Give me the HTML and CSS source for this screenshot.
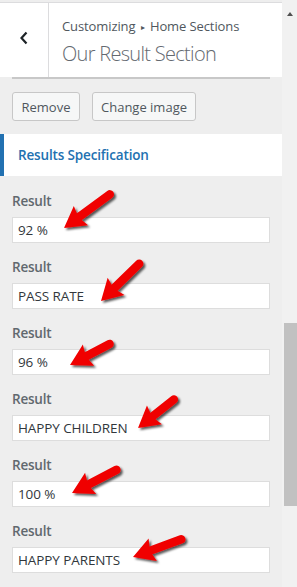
FILE: index.html
```html
<!DOCTYPE html>
<html>
<head>
<meta charset="utf-8">
<link rel="stylesheet" href="styles.css">
</head>
<body>
<div class="frame">
  <div class="panel">
    <header class="head">
      <div class="back">
        <svg width="10" height="14" viewBox="0 0 10 14"><path d="M7.5 1.5 L2.5 7 L7.5 12.5" fill="none" stroke="#1d2327" stroke-width="2.2"/></svg>
      </div>
      <div class="titles">
        <div class="crumb">Customizing <span class="tri">▸</span> Home Sections</div>
        <div class="title">Our Result Section</div>
      </div>
    </header>
    <div class="preview-edge"></div>
    <div class="btns">
      <button class="btn btn-remove">Remove</button>
      <button class="btn btn-change">Change image</button>
    </div>
    <div class="section">Results Specification</div>
    <div class="fields">
      <div class="field"><div class="label">Result</div><div class="input">92 %</div></div>
      <div class="field"><div class="label">Result</div><div class="input">PASS RATE</div></div>
      <div class="field"><div class="label">Result</div><div class="input">96 %</div></div>
      <div class="field"><div class="label">Result</div><div class="input">HAPPY CHILDREN</div></div>
      <div class="field"><div class="label">Result</div><div class="input">100 %</div></div>
      <div class="field"><div class="label">Result</div><div class="input">HAPPY PARENTS</div></div>
    </div>
  </div>
  <div class="scrollbar">
    <div class="up"></div>
    <div class="thumb"></div>
  </div>
  <svg class="arrows" width="297" height="587" viewBox="0 0 297 587">
    <defs>
      <filter id="sh" x="-30%" y="-30%" width="160%" height="160%">
        <feDropShadow dx="2" dy="2" stdDeviation="1.2" flood-color="#000" flood-opacity="0.65"/>
      </filter>
    </defs>
    <g fill="#f00000" stroke="#f00000" filter="url(#sh)">
      <g transform="translate(64 228) rotate(143.7)">
        <line x1="-12" y1="0" x2="-56.8" y2="0" stroke-width="8.5" stroke-linecap="round"/>
        <polygon points="0,0 -21,-12 -18,0 -21,12" stroke="none"/>
      </g>
      <g transform="translate(101 301) rotate(135.7)">
        <line x1="-12" y1="0" x2="-53.3" y2="0" stroke-width="8.5" stroke-linecap="round"/>
        <polygon points="0,0 -21,-12 -18,0 -21,12" stroke="none"/>
      </g>
      <g transform="translate(70 365) rotate(151.9)">
        <line x1="-12" y1="0" x2="-44.8" y2="0" stroke-width="8.5" stroke-linecap="round"/>
        <polygon points="0,0 -21,-12 -18,0 -21,12" stroke="none"/>
      </g>
      <g transform="translate(138 428) rotate(141.5)">
        <line x1="-12" y1="0" x2="-45.8" y2="0" stroke-width="8.5" stroke-linecap="round"/>
        <polygon points="0,0 -21,-12 -18,0 -21,12" stroke="none"/>
      </g>
      <g transform="translate(72 493) rotate(152.5)">
        <line x1="-12" y1="0" x2="-50.1" y2="0" stroke-width="8.5" stroke-linecap="round"/>
        <polygon points="0,0 -21,-12 -18,0 -21,12" stroke="none"/>
      </g>
      <g transform="translate(133 557) rotate(159.9)">
        <line x1="-12" y1="0" x2="-51.4" y2="0" stroke-width="8.5" stroke-linecap="round"/>
        <polygon points="0,0 -21,-12 -18,0 -21,12" stroke="none"/>
      </g>
    </g>
  </svg>
</div>
</body>
</html>
```

FILE: styles.css
```css
* { box-sizing: border-box; }
html, body { margin: 0; padding: 0; }
body {
  width: 297px;
  height: 587px;
  overflow: hidden;
  background: #eeeeee;
  font-family: "Open Sans", "Noto Sans", sans-serif;
  color: #50575e;
}
.frame {
  position: relative;
  display: flex;
  width: 297px;
  height: 587px;
}
.panel {
  width: 282px;
  background: #eeeeee;
  display: flex;
  flex-direction: column;
}
.head {
  margin-top: 2px;
  border-top: 1px solid #dcdcde;
  height: 75px;
  background: #fff;
  display: flex;
}
.back {
  width: 49px;
  border-right: 1px solid #dcdcde;
  display: flex;
  align-items: center;
  justify-content: center;
  padding-bottom: 4px;
}
.titles {
  padding: 14px 0 0 13px;
}
.crumb {
  font-size: 13px;
  line-height: 18px;
  color: #50575e;
  letter-spacing: -0.1px;
  white-space: nowrap;
}
.tri { font-size: 8px; color: #50575e; margin: 0 2px; position: relative; top: -1px; }
.title {
  margin-top: 5px;
  font-size: 20px;
  line-height: 24px;
  font-weight: 300;
  color: #646970;
  letter-spacing: -0.7px;
  white-space: nowrap;
}
.preview-edge {
  margin: 0 12px;
  height: 2px;
  background: #c8c8c8;
}
.btns {
  display: flex;
  gap: 12px;
  padding: 13px 12px 0;
}
.btn {
  height: 29px;
  padding: 0;
  border: 1px solid #c7c7c7;
  border-radius: 3px;
  background: #f6f7f7;
  font-family: inherit;
  font-size: 13px;
  color: #50575e;
  white-space: nowrap;
}
.btn-remove { width: 68px; }
.btn-change { width: 104px; }
.section {
  margin-top: 13px;
  height: 42px;
  background: #fff;
  border-left: 4px solid #2271b1;
  padding: 12px 0 0 14px;
  font-size: 13.5px;
  font-weight: 600;
  color: #2271b1;
  letter-spacing: -0.15px;
}
.fields {
  padding: 15px 12px 0;
  display: flex;
  flex-direction: column;
  gap: 14px;
}
.field {
  display: flex;
  flex-direction: column;
  gap: 6px;
}
.label {
  font-size: 13.5px;
  line-height: 20px;
  font-weight: 600;
  color: #61686e;
  letter-spacing: -0.2px;
}
.input {
  height: 26px;
  background: #fff;
  border: 1px solid #dddddd;
  padding: 0 5px;
  font-size: 13.5px;
  line-height: 24px;
  color: #32373c;
  letter-spacing: -0.1px;
}
.scrollbar {
  width: 15px;
  background: #f1f1f1;
  display: flex;
  flex-direction: column;
  align-items: flex-end;
}
.up {
  margin: 12px 4px 0 0;
  width: 0;
  height: 0;
  border-left: 3.5px solid transparent;
  border-right: 3.5px solid transparent;
  border-bottom: 4px solid #505050;
}
.thumb {
  margin-top: 307px;
  width: 13px;
  height: 183px;
  background: #c1c1c1;
}
.arrows {
  position: absolute;
  left: 0;
  top: 0;
  pointer-events: none;
}
```
